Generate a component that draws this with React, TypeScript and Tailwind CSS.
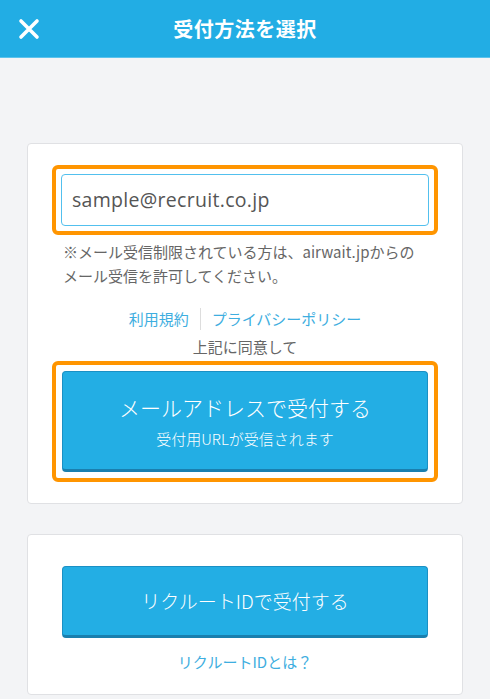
import React from "react";

const font = { fontFamily: '"Noto Sans CJK JP", "Noto Sans", sans-serif' };

const CloseIcon = () => (
  <svg width="22" height="22" viewBox="0 0 22 22" className="block">
    <path d="M3 3 L19 19 M19 3 L3 19" stroke="white" strokeWidth="3.6" strokeLinecap="round" />
  </svg>
);

export default function App() {
  return (
    <div className="w-[490px] h-[699px] bg-[#f3f4f6] overflow-hidden" style={font}>
      {/* header */}
      <header className="relative h-[58px] bg-[#22ade4] flex items-center justify-center border-b border-[#5cc3ec]">
        <button className="absolute left-[18px] top-[18px]">
          <CloseIcon />
        </button>
        <h1 className="text-white text-[20px] font-bold tracking-[0.5px]">受付方法を選択</h1>
      </header>

      <div className="px-[27px] pt-[85px]">
        {/* mail card */}
        <section className="bg-white border border-[#e0e1e4] rounded-[4px] px-[24px] pt-[21px] pb-[21px]">
          <div className="border-[4px] border-[#ff9500] rounded-[6px] p-[5px]">
            <div className="h-[52px] border border-[#52c0ee] rounded-[4px] flex items-center px-[10px]">
              <span className="text-[19.5px] text-[#555] tracking-[0.3px]" style={{ fontFamily: '"Open Sans", "Noto Sans", sans-serif' }}>
                sample@recruit.co.jp
              </span>
            </div>
          </div>
          <p className="mt-[5px] px-[11px] text-[15px] leading-[24px] text-[#666]">
            ※メール受信制限されている方は、airwait.jpからのメール受信を許可してください。
          </p>
          <div className="mt-[19px] flex items-center justify-center text-[15px] leading-[24px] text-[#3eaee0]">
            <span>利用規約</span>
            <span className="mx-[11px] w-px h-[22px] bg-[#ddd]" />
            <span>プライバシーポリシー</span>
          </div>
          <p className="mt-[6px] text-center text-[15px] leading-[20px] text-[#666]">上記に同意して</p>
          <div className="mt-[4px] border-[4px] border-[#ff9500] rounded-[6px] p-[6px]">
            <button className="w-full h-[101px] bg-[#23aee4] border border-b-[3px] border-[#1b90c4] border-b-[#1a7fae] rounded-[4px] flex flex-col items-center justify-center text-white">
              <span className="text-[21px] leading-[28px] font-light">メールアドレスで受付する</span>
              <span className="mt-[8px] text-[15px] leading-[20px] font-light">受付用URLが受信されます</span>
            </button>
          </div>
        </section>

        {/* recruit id card */}
        <section className="mt-[30px] bg-white border border-[#e0e1e4] rounded-[4px] px-[34px] pt-[31px] pb-[20px]">
          <button className="w-full h-[72px] bg-[#23aee4] border border-b-[3px] border-[#1b90c4] border-b-[#1a7fae] rounded-[4px] flex items-center justify-center text-white">
            <span className="text-[19px] font-light">リクルートIDで受付する</span>
          </button>
          <p className="mt-[12px] text-center text-[15px] leading-[24px] text-[#3eaee0]">リクルートIDとは？</p>
        </section>
      </div>
    </div>
  );
}
